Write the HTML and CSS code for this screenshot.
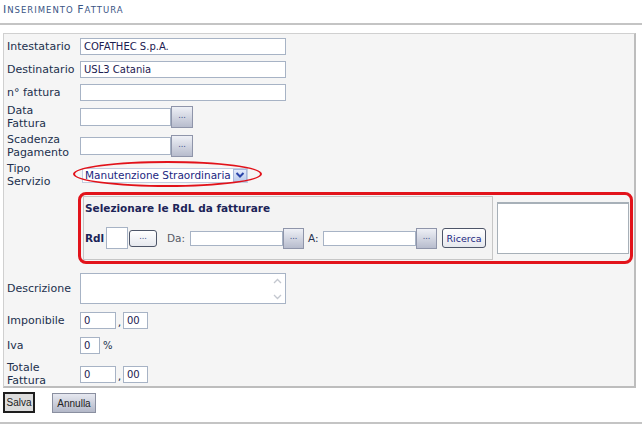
FILE: index.html
```html
<!DOCTYPE html>
<html lang="it">
<head>
<meta charset="utf-8">
<title>Inserimento Fattura</title>
<link rel="stylesheet" href="styles.css">
</head>
<body>
<div class="title"><span class="cap">I</span><span class="sc">nserimento</span> <span class="cap">F</span><span class="sc">attura</span></div>
<div class="rule"></div>

<div class="panel">
  <div class="row r1">
    <span class="lbl">Intestatario</span>
    <input class="inp w-long" type="text" value="COFATHEC S.p.A.">
  </div>
  <div class="row r2">
    <span class="lbl">Destinatario</span>
    <input class="inp w-long" type="text" value="USL3 Catania">
  </div>
  <div class="row r3">
    <span class="lbl">n° fattura</span>
    <input class="inp w-long" type="text" value="">
  </div>
  <div class="row r4">
    <span class="lbl">Data<br>Fattura</span>
    <input class="inp w-date" type="text" value="">
    <button class="dots" type="button">...</button>
  </div>
  <div class="row r5">
    <span class="lbl">Scadenza<br>Pagamento</span>
    <input class="inp w-date" type="text" value="">
    <button class="dots" type="button">...</button>
  </div>
  <div class="row r6">
    <span class="lbl">Tipo<br>Servizio</span>
    <div class="sel">
      <span class="sel-text">Manutenzione Straordinaria</span>
      <span class="sel-arrow"><svg width="10" height="8" viewBox="0 0 10 8"><path d="M1.5 2 L5 5.5 L8.5 2" fill="none" stroke="#2a44a8" stroke-width="2"/></svg></span>
    </div>
    <div class="ellipse"></div>
  </div>
  <div class="row r7">
    <div class="rdl-box">
      <div class="rdl-set">
        <div class="rdl-head">Selezionare le RdL da fatturare</div>
        <div class="rdl-ctrls">
          <span class="rdl-lbl">Rdl</span>
          <input class="inp w-rdl" type="text" value="">
          <button class="dots-round" type="button">...</button>
          <span class="da">Da:</span>
          <input class="inp w-range" type="text" value="">
          <button class="dots d-small" type="button">...</button>
          <span class="a">A:</span>
          <input class="inp w-range" type="text" value="">
          <button class="dots d-small" type="button">...</button>
          <button class="ricerca" type="button">Ricerca</button>
        </div>
      </div>
      <div class="rdl-list"></div>
    </div>
  </div>
  <div class="row r8">
    <span class="lbl">Descrizione</span>
    <div class="ta">
      <div class="sb">
        <svg width="9" height="6" viewBox="0 0 9 6"><path d="M1 5 L4.5 1.5 L8 5" fill="none" stroke="#c3c7cf" stroke-width="1.3"/></svg>
        <svg width="9" height="6" viewBox="0 0 9 6"><path d="M1 1 L4.5 4.5 L8 1" fill="none" stroke="#c3c7cf" stroke-width="1.3"/></svg>
      </div>
    </div>
  </div>
  <div class="row r9">
    <span class="lbl">Imponibile</span>
    <input class="inp w-int" type="text" value="0">
    <span class="sep">,</span>
    <input class="inp w-dec" type="text" value="00">
  </div>
  <div class="row r10">
    <span class="lbl">Iva</span>
    <input class="inp w-iva" type="text" value="0">
    <span class="pct">%</span>
  </div>
  <div class="row r11">
    <span class="lbl">Totale<br>Fattura</span>
    <input class="inp w-int" type="text" value="0">
    <span class="sep">,</span>
    <input class="inp w-dec" type="text" value="00">
  </div>
</div>

<div class="actions">
  <button class="btn-save" type="button">Salva</button>
  <button class="btn-cancel" type="button">Annulla</button>
</div>
<div class="rule bottom"></div>
</body>
</html>
```

FILE: styles.css
```css
html, body {
  margin: 0;
  padding: 0;
  background: #ffffff;
}
body {
  font-family: "DejaVu Sans", Verdana, sans-serif;
  font-size: 11px;
  color: #22304d;
}

.title {
  height: 23px;
  box-sizing: border-box;
  padding: 4px 0 0 3px;
  line-height: 12px;
  color: #3a5585;
  white-space: nowrap;
}
.title .cap {
  font-size: 11px;
  letter-spacing: 1px;
}
.title .sc {
  font-size: 8.5px;
  text-transform: uppercase;
  letter-spacing: 1px;
}

.rule {
  height: 2px;
  background: #c4c4c4;
}
.rule.bottom {
  margin-top: 9px;
}

.panel {
  margin: 8px 0 0 3px;
  width: 633px;
  box-sizing: border-box;
  border-top: 1px solid #d0d0d0;
  border-left: 1px solid #d0d0d0;
  border-right: 2px solid #bdbdbd;
  border-bottom: 2px solid #bdbdbd;
  background: #f5f5f5;
  padding-left: 3px;
}

.row {
  display: flex;
  align-items: center;
  position: relative;
}
.r1 { height: 24px; }
.r2 { height: 22px; }
.r3 { height: 24px; }
.r4 { height: 26px; }
.r5 { height: 32px; }
.r6 { height: 26px; }
.r7 { height: 80px; }
.r8 { height: 40px; }
.r9 { height: 24px; }
.r10 { height: 26px; }
.r11 { height: 28px; box-sizing: border-box; padding-top: 4px; }

.lbl {
  width: 73px;
  flex: none;
  line-height: 13px;
  color: #22304d;
}

.inp {
  box-sizing: border-box;
  height: 17px;
  margin: 0;
  padding: 0 0 0 3px;
  border: 1px solid #a7b3c5;
  background: #ffffff;
  font-family: "DejaVu Sans", Verdana, sans-serif;
  font-size: 10px;
  color: #1c2050;
  outline: none;
  border-radius: 0;
}
.w-long { width: 206px; }
.w-date { width: 91px; height: 18px; }
.w-rdl { width: 22px; height: 22px; margin-left: 3px; }
.w-range { width: 93px; height: 15px; }
.w-int { width: 36px; }
.w-dec { width: 25px; }
.w-iva { width: 20px; }

.sep {
  width: 7px;
  text-align: center;
  padding-top: 4px;
}
.pct {
  margin-left: 3px;
  font-size: 10px;
}

.dots {
  box-sizing: border-box;
  width: 22px;
  height: 22px;
  margin: 0;
  padding: 0 0 2px 0;
  border: 1px solid #8f95aa;
  background: linear-gradient(#eef0f6, #b7bccd);
  color: #3a4a8a;
  font-family: "DejaVu Sans", Verdana, sans-serif;
  font-size: 8px;
  line-height: 10px;
  border-radius: 0;
}
.dots.d-small {
  width: 21px;
  height: 21px;
}

.sel {
  margin-left: 2px;
  width: 166px;
  height: 15px;
  box-sizing: border-box;
  border: 1px solid #c5cde0;
  background: #ffffff;
  display: flex;
  align-items: center;
  padding-left: 2px;
}
.sel-text {
  font-size: 10.5px;
  color: #1c2680;
  line-height: 12px;
  white-space: nowrap;
}
.sel-arrow {
  margin-left: auto;
  margin-right: 0;
  width: 14px;
  height: 13px;
  box-sizing: border-box;
  border: 1px solid #a9b9dc;
  background: linear-gradient(#e3ebfb, #bccbeb);
  display: flex;
  align-items: center;
  justify-content: center;
}

.ellipse {
  position: absolute;
  left: 66px;
  top: -1px;
  width: 189px;
  height: 26px;
  box-sizing: border-box;
  border: 2px solid #e2121a;
  border-radius: 50%;
  pointer-events: none;
}

.rdl-box {
  margin-left: 71px;
  width: 555px;
  height: 72px;
  box-sizing: border-box;
  border: 3px solid #e2131b;
  border-radius: 8px;
  display: flex;
  align-items: center;
  padding-left: 2px;
}
.rdl-set {
  width: 410px;
  height: 64px;
  box-sizing: border-box;
  border: 1px solid #c6c6c6;
  background: #f3f3f3;
  padding: 5px 0 0 1px;
}
.rdl-head {
  font-weight: bold;
  font-size: 10.5px;
  line-height: 12px;
  color: #1c2458;
  white-space: nowrap;
}
.rdl-ctrls {
  margin-top: 13px;
  height: 22px;
  display: flex;
  align-items: center;
}
.rdl-lbl {
  font-weight: bold;
  font-size: 10.5px;
  color: #1c2458;
  width: 18px;
}
.dots-round {
  box-sizing: border-box;
  width: 28px;
  height: 17px;
  margin: 0 0 0 1px;
  padding: 0 0 2px 0;
  border: 1px solid #4d5568;
  border-radius: 3px;
  background: linear-gradient(#ffffff, #e6e8ee);
  color: #3a4a8a;
  font-family: "DejaVu Sans", Verdana, sans-serif;
  font-size: 8px;
  line-height: 10px;
}
.da {
  margin-left: 10px;
  width: 23px;
  font-size: 10.5px;
  color: #555a66;
}
.a {
  margin-left: 4px;
  width: 15px;
  font-size: 10.5px;
  color: #2a3350;
}
.ricerca {
  box-sizing: border-box;
  width: 44px;
  height: 20px;
  margin: 0 0 0 5px;
  padding: 0;
  border: 1px solid #4d5568;
  border-radius: 3px;
  background: linear-gradient(#ffffff, #e6e8ee);
  color: #1c2680;
  font-family: "DejaVu Sans", Verdana, sans-serif;
  font-size: 9.5px;
}
.rdl-list {
  margin-left: 4px;
  width: 132px;
  height: 52px;
  box-sizing: border-box;
  border: 1px solid #a7b0b8;
  border-top: 2px solid #a7b0b8;
  background: #ffffff;
}

.ta {
  width: 206px;
  height: 31px;
  box-sizing: border-box;
  border: 1px solid #a7b3c5;
  background: #ffffff;
  display: flex;
  justify-content: flex-end;
}
.sb {
  width: 16px;
  display: flex;
  flex-direction: column;
  justify-content: space-between;
  align-items: center;
  padding: 4px 0 3px 0;
  box-sizing: border-box;
}

.actions {
  display: flex;
  align-items: flex-start;
  margin: 4px 0 0 3px;
  height: 21px;
}
.btn-save {
  box-sizing: border-box;
  width: 32px;
  height: 21px;
  margin: 0;
  padding: 0;
  border: 2px solid #1e1e1e;
  background: #dcdcdc;
  color: #222222;
  font-family: "Liberation Sans", Arial, sans-serif;
  font-size: 10px;
}
.btn-cancel {
  box-sizing: border-box;
  width: 44px;
  height: 20px;
  margin: 1px 0 0 17px;
  padding: 0;
  border: 1px solid #8a8fa0;
  background: linear-gradient(#e6e8f0, #b3b8c8);
  color: #222222;
  font-family: "Liberation Sans", Arial, sans-serif;
  font-size: 10px;
}
```
